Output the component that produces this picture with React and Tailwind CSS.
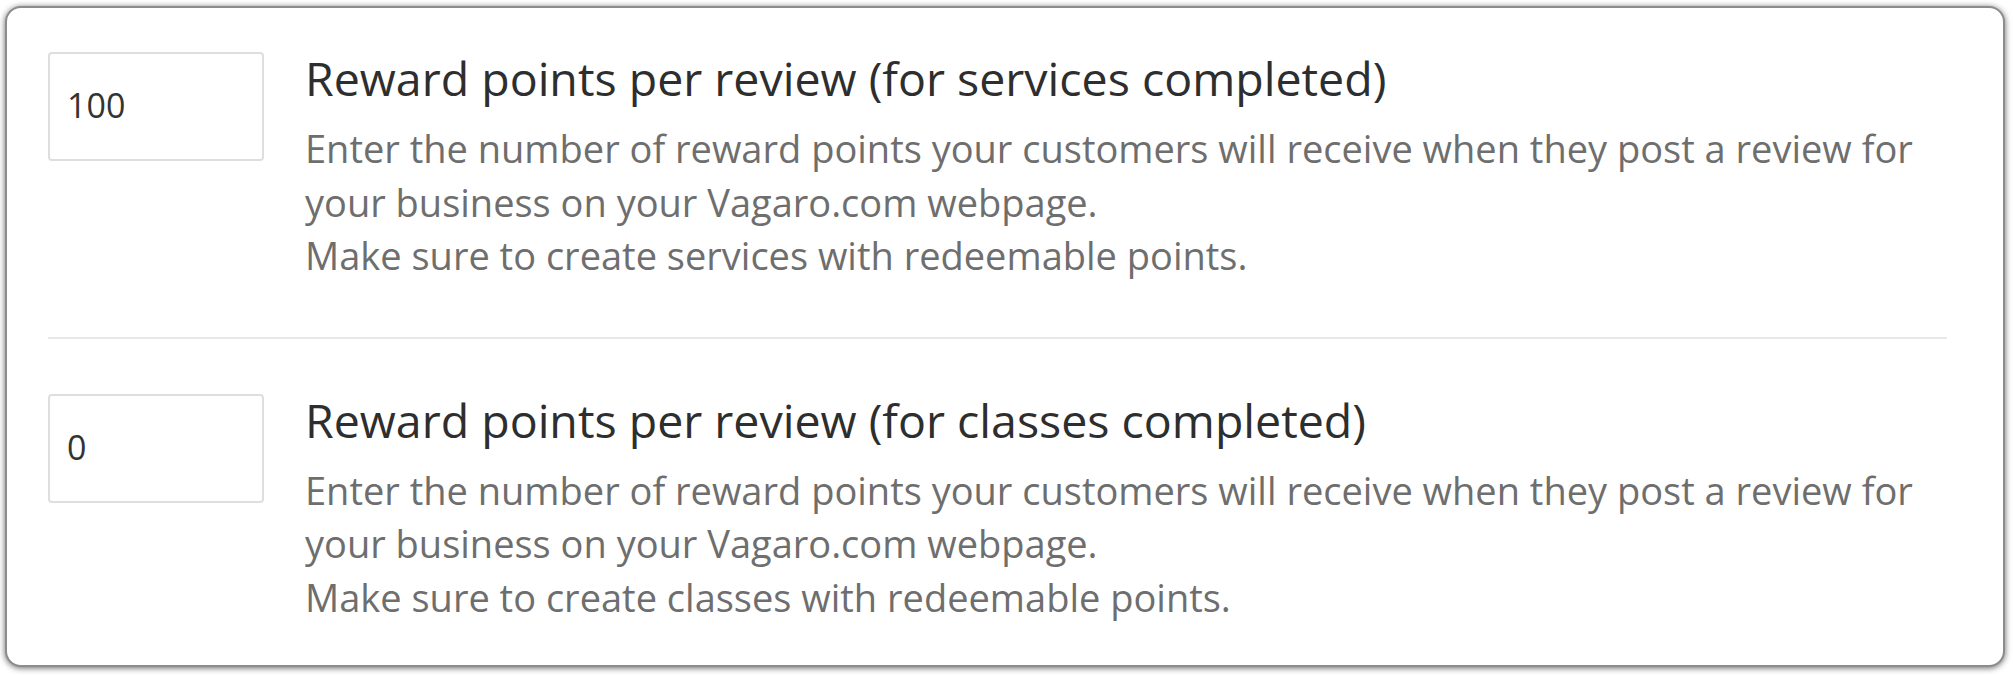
import React from 'react';

const rows = [
{
  value: '100',
  title: 'Reward points per review (for services completed)',
  note: 'Make sure to create services with redeemable points.'
},
{
  value: '0',
  title: 'Reward points per review (for classes completed)',
  note: 'Make sure to create classes with redeemable points.'
}];

function RewardRow({ row }) {
  return (
    <div className="flex items-start">
      <input
        type="text"
        defaultValue={row.value}
        className="w-[216px] h-[109px] shrink-0 ml-[6px] px-[17px] pb-[3px] rounded-[4px] border-2 border-[#dedede] bg-white text-[34px] text-[#333333] outline-none" />

      <div className="ml-[41px]">
        <h3 className="text-[46.5px] leading-[52px] font-normal text-[#2e2e2e]">{row.title}</h3>
        <p className="mt-[18px] text-[38px] leading-[53.5px] text-[#6e6e6e]">
          Enter the number of reward points your customers will receive when they post a review for
          <br />
          your business on your Vagaro.com webpage.
          <br />
          {row.note}
        </p>
      </div>
    </div>);

}

export default function App() {
  return (
    <div className="w-[2013px] h-[675px] bg-white pt-[6px] pl-[5px] font-['Open_Sans',sans-serif]">
      <div className="w-[2000px] h-[661px] rounded-[16px] border-2 border-[#8c8c8c] bg-white shadow-[0_1px_6px_rgba(0,0,0,0.6)] pt-[44px] pl-[35px] pr-[56px]">
        <div className="pb-[54px]">
          <RewardRow row={rows[0]} />
        </div>
        <div className="ml-[6px] h-[2px] bg-[#e8e8e8]" />
        <div className="pt-[55px]">
          <RewardRow row={rows[1]} />
        </div>
      </div>
    </div>);

}
